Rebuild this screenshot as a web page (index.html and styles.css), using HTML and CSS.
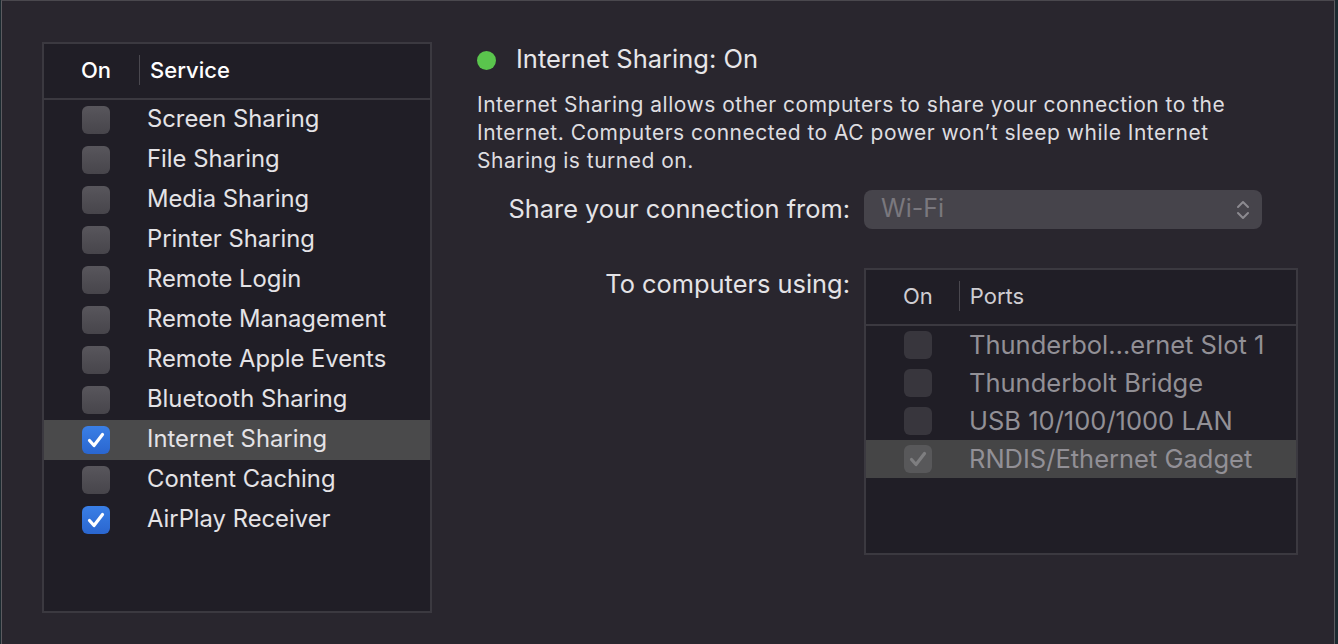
FILE: index.html
```html
<!DOCTYPE html>
<html>
<head>
<meta charset="utf-8">
<link rel="stylesheet" href="styles.css">
</head>
<body>
<div class="window">
  <div class="services">
    <div class="thead">
      <span class="th-on">On</span>
      <span class="th-div"></span>
      <span class="th-name">Service</span>
    </div>
    <div class="rows">
      <div class="row"><span class="cb"></span><span class="lbl">Screen Sharing</span></div>
      <div class="row"><span class="cb"></span><span class="lbl">File Sharing</span></div>
      <div class="row"><span class="cb"></span><span class="lbl">Media Sharing</span></div>
      <div class="row"><span class="cb"></span><span class="lbl">Printer Sharing</span></div>
      <div class="row"><span class="cb"></span><span class="lbl">Remote Login</span></div>
      <div class="row"><span class="cb"></span><span class="lbl">Remote Management</span></div>
      <div class="row"><span class="cb"></span><span class="lbl">Remote Apple Events</span></div>
      <div class="row"><span class="cb"></span><span class="lbl">Bluetooth Sharing</span></div>
      <div class="row sel"><span class="cb on"><svg viewBox="0 0 28 28"><path d="M7.5 14.5 L12 19.5 L20.5 8.5" /></svg></span><span class="lbl">Internet Sharing</span></div>
      <div class="row"><span class="cb"></span><span class="lbl">Content Caching</span></div>
      <div class="row"><span class="cb on"><svg viewBox="0 0 28 28"><path d="M7.5 14.5 L12 19.5 L20.5 8.5" /></svg></span><span class="lbl">AirPlay Receiver</span></div>
    </div>
  </div>

  <div class="detail">
    <div class="status">
      <span class="dot"></span>
      <span class="status-text">Internet Sharing: On</span>
    </div>
    <p class="desc">Internet Sharing allows other computers to share your connection to the<br>Internet. Computers connected to AC power won’t sleep while Internet<br>Sharing is turned on.</p>

    <div class="form">
      <div class="flabel l1">Share your connection from:</div>
      <div class="popup">
        <span class="popup-val">Wi-Fi</span>
        <svg class="chev" viewBox="0 0 16 24"><path d="M3 9 L8 4 L13 9 M3 15 L8 20 L13 15" /></svg>
      </div>
      <div class="flabel l2">To computers using:</div>
      <div class="ports">
        <div class="thead pthead">
          <span class="th-on">On</span>
          <span class="th-div"></span>
          <span class="th-name">Ports</span>
        </div>
        <div class="prows">
          <div class="prow"><span class="pcb"></span><span class="plbl">Thunderbol…ernet Slot 1</span></div>
          <div class="prow"><span class="pcb"></span><span class="plbl">Thunderbolt Bridge</span></div>
          <div class="prow"><span class="pcb"></span><span class="plbl">USB 10/100/1000 LAN</span></div>
          <div class="prow sel"><span class="pcb on"><svg viewBox="0 0 28 28"><path d="M7.5 14.5 L12 19.5 L20.5 8.5" /></svg></span><span class="plbl">RNDIS/Ethernet Gadget</span></div>
        </div>
      </div>
    </div>
  </div>
</div>
</body>
</html>
```

FILE: styles.css
```css
* { box-sizing: border-box; }
html, body { margin: 0; padding: 0; }
body {
  width: 1338px;
  height: 644px;
  background: #1b2a30;
  font-family: Inter, "Noto Sans", "Liberation Sans", sans-serif;
  overflow: hidden;
}
.window {
  margin-left: 1px;
  width: 1334px;
  height: 644px;
  background: #29262e;
  border-left: 1px solid #5c5b60;
  border-top: 1px solid #4a484e;
  border-right: 1px solid #5c5b60;
  display: flex;
  padding: 41px 0 0 40px;
}
.services {
  width: 390px;
  height: 571px;
  border: 2px solid #3b3940;
  background: #201e26;
  flex: none;
}
.thead {
  height: 56px;
  border-bottom: 2px solid #3b3940;
  display: flex;
  align-items: center;
  color: #ffffff;
  font-size: 22px;
  font-weight: 500;
  padding-bottom: 2px;
}
.th-on { padding-left: 37px; }
.th-div {
  width: 1px;
  height: 30px;
  background: #4a484f;
  margin-left: 28px;
  margin-right: 10px;
}
.rows { display: flex; flex-direction: column; }
.row {
  height: 40px;
  display: flex;
  align-items: center;
  color: #e4e3e6;
  font-size: 23.8px;
}
.lbl { padding-bottom: 3px; }
.plbl { padding-bottom: 2px; }
.row.sel { background: #4a4a4b; }
.cb {
  width: 28px;
  height: 28px;
  border-radius: 6px;
  margin-left: 38px;
  margin-right: 37px;
  background: linear-gradient(#58565c, #47454b);
  display: flex;
  align-items: center;
  justify-content: center;
  flex: none;
}
.cb.on { background: linear-gradient(#3a7fe6, #2a66cf); }
.cb svg, .pcb svg { width: 28px; height: 28px; }
.cb svg path {
  fill: none;
  stroke: #ffffff;
  stroke-width: 3.2;
  stroke-linecap: round;
  stroke-linejoin: round;
}
.detail {
  margin-left: 45px;
  display: flex;
  flex-direction: column;
}
.status {
  display: flex;
  align-items: center;
  height: 36px;
}
.dot {
  width: 19px;
  height: 19px;
  border-radius: 50%;
  background: #5ac54d;
  margin-right: 20px;
  margin-top: 1px;
}
.status-text {
  color: #e7e6e9;
  font-size: 25.5px;
  padding-bottom: 3px;
}
.desc {
  margin: 13px 0 0 0;
  color: #dedde0;
  font-size: 21px;
  letter-spacing: 0.5px;
  line-height: 28px;
  white-space: nowrap;
}
.form {
  display: grid;
  grid-template-columns: 373px 434px;
  column-gap: 14px;
  grid-template-rows: 39px auto;
  row-gap: 39px;
  margin-top: 15px;
}
.flabel {
  text-align: right;
  color: #e4e3e6;
  font-size: 25.4px;
  white-space: nowrap;
}
.l1 { line-height: 37px; }
.l2 { line-height: 32px; }
.popup {
  width: 398px;
  height: 39px;
  background: #46444b;
  border-radius: 8px;
  display: flex;
  align-items: center;
  justify-content: space-between;
  padding: 0 11px 0 17px;
}
.popup-val { color: #7a787e; font-size: 25px; padding-bottom: 3px; }
.chev { width: 16px; height: 24px; }
.chev path {
  fill: none;
  stroke: #8c8a90;
  stroke-width: 2;
  stroke-linecap: round;
  stroke-linejoin: round;
}
.ports {
  width: 434px;
  height: 287px;
  border: 2px solid #3b3940;
  background: #201e26;
}
.pthead { height: 56px; font-size: 22px; color: #cfcdd2; font-weight: 400; }
.pthead .th-div { margin-left: 26px; }
.prow {
  height: 38px;
  display: flex;
  align-items: center;
  color: #929096;
  font-size: 25.5px;
}
.prow.sel { background: #454546; }
.pcb {
  width: 28px;
  height: 28px;
  border-radius: 6px;
  margin-left: 38px;
  margin-right: 37px;
  background: #38363d;
  display: flex;
  align-items: center;
  justify-content: center;
  flex: none;
}
.pcb.on { background: #58585a; }
.pcb svg path {
  fill: none;
  stroke: #7e7e80;
  stroke-width: 3.2;
  stroke-linecap: round;
  stroke-linejoin: round;
}
```
